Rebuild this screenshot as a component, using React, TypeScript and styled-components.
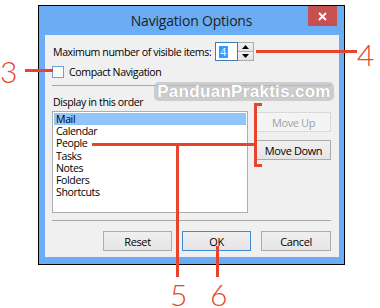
import React from "react";
import styled, { createGlobalStyle } from "styled-components";

const Global = createGlobalStyle`
  html, body { margin: 0; padding: 0; background: #ffffff; }
  body { font-family: "Open Sans", "Noto Sans", sans-serif; }
`;

const RED = "#E8442B";
const UI_FONT = `"Open Sans", "Noto Sans", Arial, sans-serif`;

const Stage = styled.div`
  position: relative;
  width: 380px;
  height: 308px;
  overflow: hidden;
  background: #ffffff;
  padding: 5px 0 0 38px;
  box-sizing: border-box;
`;

const Window = styled.div`
  width: 307px;
  height: 260px;
  box-sizing: border-box;
  border: 1px solid #000;
  background: #6aadf4;
  padding: 0 5px 7px 6px;
  display: flex;
  flex-direction: column;
`;

const TitleBar = styled.div`
  height: 29px;
  display: grid;
  grid-template-columns: 1fr auto 1fr;
  align-items: start;
  margin-left: -6px;
  margin-right: -5px;
`;

const Title = styled.div`
  grid-column: 2;
  font-family: ${UI_FONT};
  font-size: 14px;
  color: #1e1e1e;
  line-height: 29px;
  letter-spacing: -0.2px;
`;

const CloseButton = styled.div`
  grid-column: 3;
  justify-self: end;
  margin-right: 7px;
  width: 29px;
  height: 20px;
  background: #c75050;
  display: flex;
  align-items: center;
  justify-content: center;
`;

const Content = styled.div`
  flex: 1;
  background: #f0f0f0;
  padding: 7px 8px 6px 7px;
  display: flex;
  flex-direction: column;
  font-family: ${UI_FONT};
  font-size: 10.6px;
  letter-spacing: -0.4px;
  color: #000;
`;

const Row = styled.div<{ $mt?: number; $h: number }>`
  display: flex;
  align-items: center;
  margin-top: ${(p) => p.$mt ?? 0}px;
  height: ${(p) => p.$h}px;
`;

const Label = styled.span<{ $ml?: number }>`
  margin-left: ${(p) => p.$ml ?? 1}px;
  white-space: nowrap;
`;

const Spin = styled.div`
  display: flex;
  margin-left: 4px;
  height: 19px;
`;

const SpinInput = styled.div`
  width: 23px;
  height: 19px;
  box-sizing: border-box;
  border: 1px solid #3c7fb1;
  background: #fff;
  display: flex;
  align-items: center;
  padding-left: 3px;
`;

const Selected = styled.span`
  background: #3399ff;
  color: #fff;
  line-height: 12px;
  padding: 0 1px;
  border-right: 1px solid #e07a2a;
`;

const SpinButtons = styled.div`
  width: 16px;
  height: 19px;
  display: flex;
  flex-direction: column;
  box-sizing: border-box;
  border: 1px solid #acacac;
  border-left: none;
`;

const SpinBtn = styled.div<{ $top?: boolean }>`
  flex: 1;
  background: linear-gradient(#f2f2f2, #e2e2e2);
  border-bottom: ${(p) => (p.$top ? "1px solid #acacac" : "none")};
  display: flex;
  align-items: center;
  justify-content: center;
`;

const Check = styled.div`
  width: 12px;
  height: 12px;
  box-sizing: border-box;
  border: 1px solid #6f9fd6;
  background: #fbfdff;
`;

const Separator = styled.div<{ $mt: number }>`
  margin-top: ${(p) => p.$mt}px;
  height: 1px;
  background: #a8a8a8;
`;

const Middle = styled.div`
  display: flex;
  gap: 8px;
  margin-top: 2px;
`;

const ListBox = styled.div`
  width: 196px;
  height: 102px;
  box-sizing: border-box;
  border: 1px solid #abadb3;
  background: #fff;
  padding: 1px;
`;

const ListItem = styled.div<{ $selected?: boolean }>`
  height: 12.2px;
  line-height: 12.2px;
  padding-left: 2px;
  background: ${(p) => (p.$selected ? "#91c5f9" : "transparent")};
`;

const Side = styled.div`
  display: flex;
  flex-direction: column;
  gap: 8px;
  padding-top: 1px;
`;

const Button = styled.div<{ $w: number; $disabled?: boolean; $default?: boolean }>`
  width: ${(p) => p.$w}px;
  height: 20px;
  box-sizing: border-box;
  display: flex;
  align-items: center;
  justify-content: center;
  border: 1px solid
    ${(p) => (p.$disabled ? "#d9d9d9" : p.$default ? "#3c8ad8" : "#acacac")};
  background: ${(p) =>
    p.$disabled ? "#f4f4f4" : "linear-gradient(#f0f0f0, #e5e5e5)"};
  color: ${(p) => (p.$disabled ? "#a0a0a0" : "#000")};
  font-size: 11px;
`;

const Footer = styled.div`
  display: flex;
  justify-content: flex-end;
  gap: 10px;
  margin-top: 10px;
`;

const Watermark = styled.div`
  position: absolute;
  left: 154px;
  top: 82px;
  width: 180px;
  height: 19px;
  border-radius: 5px;
  background: rgba(190, 190, 190, 0.7);
  color: #fff;
  font-family: "Liberation Sans", Arial, sans-serif;
  font-weight: bold;
  font-size: 17px;
  line-height: 19px;
  text-align: center;
  letter-spacing: 0.3px;
  text-shadow: 0 0 1px rgba(120, 120, 120, 0.6);
`;

const Line = styled.div`
  position: absolute;
  background: ${RED};
`;

const Digit = styled.div`
  position: absolute;
  font-family: Lato, "Open Sans", sans-serif;
  font-weight: 300;
  font-size: 30px;
  line-height: 24px;
  height: 24px;
  color: ${RED};
`;

const items = ["Mail", "Calendar", "People", "Tasks", "Notes", "Folders", "Shortcuts"];

export default function App() {
  return (
    <Stage>
      <Global />
      <Window>
        <TitleBar>
          <Title>Navigation Options</Title>
          <CloseButton>
            <svg width="9" height="9" viewBox="0 0 9 9">
              <path d="M1 1 L8 8 M8 1 L1 8" stroke="#fff" strokeWidth="2" />
            </svg>
          </CloseButton>
        </TitleBar>
        <Content>
          <Row $h={19}>
            <Label>Maximum number of visible items:</Label>
            <Spin>
              <SpinInput>
                <Selected>4</Selected>
              </SpinInput>
              <SpinButtons>
                <SpinBtn $top>
                  <svg width="7" height="4" viewBox="0 0 7 4">
                    <path d="M3.5 0 L7 4 L0 4 Z" fill="#000" />
                  </svg>
                </SpinBtn>
                <SpinBtn>
                  <svg width="7" height="4" viewBox="0 0 7 4">
                    <path d="M0 0 L7 0 L3.5 4 Z" fill="#000" />
                  </svg>
                </SpinBtn>
              </SpinButtons>
            </Spin>
          </Row>
          <Row $mt={5} $h={12}>
            <Check />
            <Label $ml={5}>Compact Navigation</Label>
          </Row>
          <Separator $mt={7} />
          <Row $mt={9} $h={14}>
            <Label>Display in this order</Label>
          </Row>
          <Middle>
            <ListBox>
              {items.map((it, i) => (
                <ListItem key={it} $selected={i === 0}>
                  {it}
                </ListItem>
              ))}
            </ListBox>
            <Side>
              <Button $w={75} $disabled>
                Move Up
              </Button>
              <Button $w={75}>Move Down</Button>
            </Side>
          </Middle>
          <Separator $mt={7} />
          <Footer>
            <Button $w={69}>Reset</Button>
            <Button $w={69} $default>
              OK
            </Button>
            <Button $w={70}>Cancel</Button>
          </Footer>
        </Content>
      </Window>

      <Watermark>PanduanPraktis.com</Watermark>

      <Line style={{ left: 25, top: 69, width: 28, height: 3 }} />
      <Digit style={{ left: 0, top: 59 }}>3</Digit>

      <Line style={{ left: 256, top: 50, width: 101, height: 3 }} />
      <Digit style={{ left: 357, top: 42 }}>4</Digit>

      <Line style={{ left: 254, top: 103, width: 3, height: 64 }} />
      <Line style={{ left: 254, top: 103, width: 8, height: 3 }} />
      <Line style={{ left: 254, top: 164, width: 8, height: 3 }} />
      <Line style={{ left: 92, top: 143, width: 164, height: 3 }} />
      <Line style={{ left: 176, top: 143, width: 3, height: 134 }} />
      <Digit style={{ left: 170, top: 282 }}>5</Digit>

      <Line style={{ left: 216, top: 246, width: 3, height: 31 }} />
      <Digit style={{ left: 210, top: 282 }}>6</Digit>
    </Stage>
  );
}
